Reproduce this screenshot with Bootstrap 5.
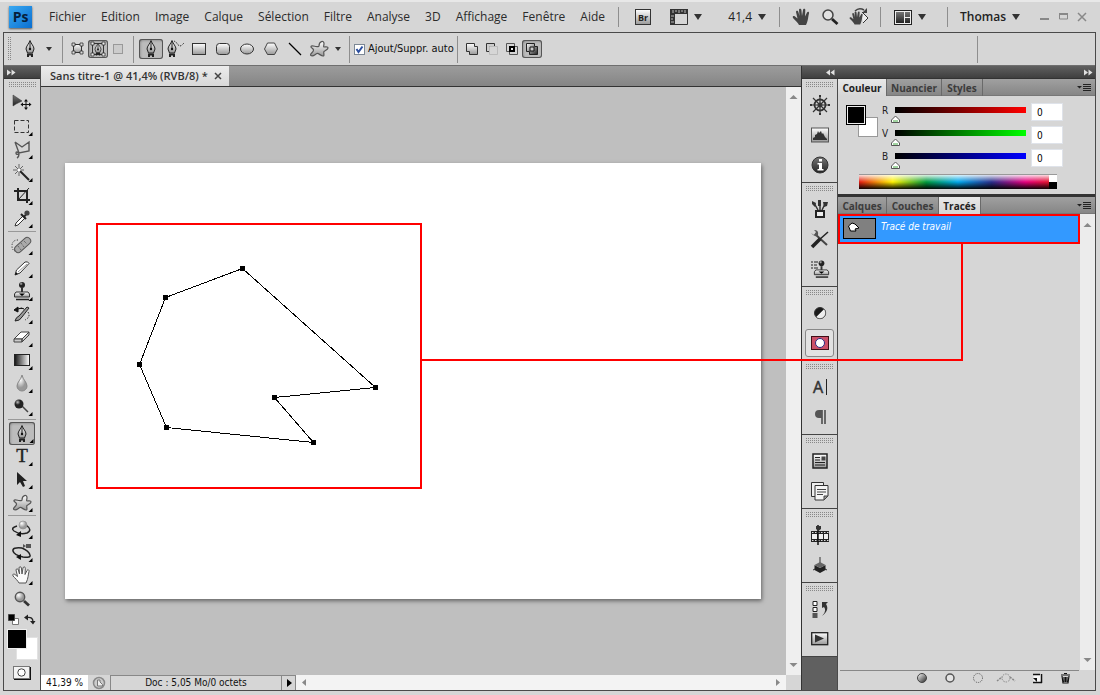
<!DOCTYPE html>
<html lang="fr">
<head>
<meta charset="utf-8">
<meta name="viewport" content="width=device-width, initial-scale=1">
<title>Sans titre-1</title>
<link href="https://cdn.jsdelivr.net/npm/bootstrap@5.3.0/dist/css/bootstrap.min.css" rel="stylesheet">
<style>
:root{--face:#d6d6d6;--edge:#4a4a4a;--ui:"Open Sans","Noto Sans",sans-serif;--small:"DejaVu Sans Condensed","DejaVu Sans",sans-serif;
--dots:url("data:image/svg+xml,%3Csvg xmlns='http://www.w3.org/2000/svg' width='2' height='2'%3E%3Crect width='1' height='1' fill='%23888'/%3E%3C/svg%3E")}
body{background:var(--face);font:12px/16px var(--ui);color:#222}
button{border:0;background:none;padding:0;color:inherit;flex:none}
svg{display:block;flex:none}
.app{min-height:100vh;border-top:2px solid #e8e8e8}
.menubar{height:30px;padding:0 13px 0 9px}
.menubar .divider{height:20px}
.menubar .caret{width:12px}
.logo{width:23px;height:22px;background:linear-gradient(135deg,#39a9f2,#0b6fd0);color:#06203c;font:bold 14px/21px var(--ui);text-align:center;box-shadow:0 1px 2px #555}
.menus{margin-left:17px;gap:15px}
.menus a{color:#2b2b2b;text-decoration:none;white-space:nowrap}
.divider{width:1px;background:#8e8e8e;flex:none}
.caret{width:14px;height:20px;display:flex;align-items:center;justify-content:center}
.caret::before{content:"";border:4px solid transparent;border-top:6px solid #333;border-bottom:0}
.caret-sm::before{border-width:4px 3px 0}
.frame{margin:0 4px 4px 3px;border:1px solid var(--edge)}
.options{height:33px;padding-left:4px;border-bottom:1px solid #6f6f6f}
.options .divider{height:27px}
.grip-v{width:4px;height:24px;background:var(--dots)}
.grip-h{height:5px;background:var(--dots);flex:none}
.btn-s{width:20px;height:18px;display:flex;align-items:center;justify-content:center}
.btn-m{width:24px;height:20px;display:flex;align-items:center;justify-content:center}
.pressed{border-radius:3px;background:#bcbcbc;box-shadow:inset 0 0 0 1px #555,inset 1px 1px 3px #777}
.form-check-input.auto{width:11px;height:11px;margin:0;border:1px solid #7b8794;border-radius:0;background-color:#fff;background-size:11px 11px;box-shadow:none;flex:none}
.form-check-input.auto:checked{background-image:url("data:image/svg+xml,%3Csvg xmlns='http://www.w3.org/2000/svg' viewBox='0 0 11 11'%3E%3Cpath d='M2.5 5l2 3L8.500 2.500' fill='none' stroke='%232b4fa0' stroke-width='2'/%3E%3C/svg%3E")}
.small-ui{font:10px/14px var(--small);color:#111}
.auto-label{font:11px/14px var(--small);color:#111;margin:0 3px;white-space:nowrap}
.darkbar{height:13px;background:linear-gradient(#606060,#3f3f3f);border-bottom:1px solid #333;flex:none;display:flex;align-items:center}
.tools{width:37px;border-right:1px solid var(--edge);flex:none}
.tools .grip-h{margin:3px 4px 5px 5px}
.tool{width:26px;height:23px;margin-left:5px;display:flex;align-items:center;justify-content:center}
.rule{height:1px;margin:1px 4px 2px 4px;background:#999}
.swatches{display:grid;grid-template:8px 12px 11px/9px 11px 11px;margin:4px 0 0 3px}
.fgc{grid-area:1/1/3/3;background:#000;border:1px solid #eee;z-index:1}
.bgc{grid-area:2/2/4/4;background:#fff;border:1px solid #e2e2e2}
.mask-btn{width:17px;height:13px;margin:6px 0 0 9px;background:#f4f4f4;border:1px solid #777;box-shadow:1px 1px 0 #111;display:grid;place-items:center}
.doc{min-width:0}
.tabstrip{height:21px;background:linear-gradient(#9c9c9c,#858585);border-bottom:1px solid #333}
.doctab{width:188px;padding:0 7px 0 9px;background:linear-gradient(#ececec,#d8d8d8);font:600 11px/20px var(--ui);color:#333;white-space:nowrap}
.pasteboard{background:#bfbfbf;padding:76px 25px 76px 24px}
.paper{background:#fff;padding:60px 31px;box-shadow:1px 2px 4px #666}
.scroll-v{width:15px;background:#efefef;padding:5px 0;flex:none}
.status{height:15px;background:var(--face)}
.status .zoomfield{width:47px;height:15px;border:0;border-radius:0;background:#fff;padding:0 0 0 5px}
.docinfo{width:171px;border:solid #888;border-width:1px 0 0 1px;text-align:center}
.playbtn{width:15px;border:1px solid #888;border-bottom:0;height:15px;display:grid;place-items:center}
.hscroll{background:#f3f3f3}
.side{width:294px;flex:none;border-left:1px solid #333}
.dock{width:36px;background:#606060;border-right:1px solid var(--edge)}
.dockgroup{background:var(--face);border-bottom:1px solid #444;padding-bottom:2px}
.dockgroup .grip-h{margin:3px 4px 3px 4px}
.dockgroup button{width:29px;height:30px;margin-left:3px;display:flex;align-items:center;justify-content:center}
.dockgroup .chosen{border:1px solid #888;border-radius:3px;background:#e2e2e2;height:28px;margin-top:1px;margin-bottom:1px}
.panels{min-width:0;background:var(--face)}
.ptabs{height:17px;background:linear-gradient(#a0a0a0,#868686);border-bottom:1px solid #777;padding-right:4px;flex:none}
.ptabs button{font:700 10px/16px var(--ui);color:#3c3c3c;padding:0;border-right:1px solid #6a6a6a;height:17px;text-align:center}
.ptabs button.on{background:linear-gradient(#e8e8e8,#d6d6d6);color:#222}
.w-a{width:49px}.w-b{width:55px}.w-c{width:41px}.w-d{width:52px}.w-e{width:42px}
.ptabs .pmenu{margin-left:auto;border:0;padding:0;display:grid;place-items:center;height:16px}
.colorpane{height:98px;padding:8px 8px 0 8px}
.pairs{display:grid;grid-template:12px 8px 12px/12px 8px 12px;margin-top:1px;width:32px}
.pairs .a{grid-area:1/1/3/3;background:#000;border:2px solid #000;outline:1px solid #eee;outline-offset:-2px;z-index:1}
.pairs .b{grid-area:2/2/4/4;background:#fff;border:1px solid #999}
.channels{margin:3px 0 0 4px}
.chan{height:23px}
.chan label{width:8px;margin-top:-2px;font:10px/12px var(--small);color:#222}
.chan input[type=range]{appearance:none;-webkit-appearance:none;width:141px;height:17px;margin:0;background:var(--ramp) 5px 0/131px 6px no-repeat;box-shadow:none}
.chan input[type=range]::-webkit-slider-thumb{-webkit-appearance:none;width:11px;height:9px;margin-top:8px;border:0;background:url("data:image/svg+xml,%3Csvg xmlns='http://www.w3.org/2000/svg' width='11' height='9'%3E%3Cpath d='M5.500 1L9.500 5V7.500H1.500V5z' fill='%23fff' stroke='%23555'/%3E%3Cpath d='M3 6h5' stroke='%234a4'/%3E%3C/svg%3E")}
.chan input[type=text]{width:32px;height:18px;border:1px solid #dfe3ea;background:#fff;padding:0 0 0 5px;margin-top:-4px;font:10px/14px var(--small)}
.spectrum{height:15px;margin:-2px 30px 0 13px;border-top:1px solid #999;background:linear-gradient(rgba(255,255,255,.85),rgba(255,255,255,0) 50%,rgba(0,0,0,.95)),linear-gradient(90deg,#e31b13,#fff200 17%,#009a3e 34%,#00a8ec 50%,#2a2f8c 67%,#e5007e 84%,#e31b13)}
.spectrum i{width:8px;background:linear-gradient(#fff 50%,#000 50%)}
.gapbar{height:3px;background:#333;flex:none}
.pathrow{height:30px;background:#39f;border:2px solid #f00;color:#fff}
.pathrow .thumb{width:33px;height:21px;background:#808080;border:1px solid #000;margin:2px 5px 0 3px}
.pathrow em{font:italic 10px/22px var(--small);color:#fff}
.pscroll{width:15px;background:#ececec;padding:7px 0 5px}
.pfoot{height:20px;margin:0 16px 0 2px;border-top:1px solid #888;padding-left:72px;gap:8px}
.pfoot button{width:20px;height:14px;display:grid;place-items:center}
.callout{position:absolute;left:421px;right:137px;top:241px;height:118px;border:solid #f00;border-width:0 2px 2px 0;pointer-events:none}
</style>
</head>
<body>
<svg width="0" height="0" class="position-absolute" aria-hidden="true">
<defs>
<linearGradient id="gv" x2="0" y2="1"><stop stop-color="#fff"/><stop offset="1" stop-color="#999"/></linearGradient>
<linearGradient id="gh"><stop stop-color="#111"/><stop offset="1" stop-color="#fff"/></linearGradient>
<linearGradient id="gd" x2="1" y2="1"><stop stop-color="#fff"/><stop offset="1" stop-color="#222"/></linearGradient>
<linearGradient id="gk" x2="0" y2="1"><stop stop-color="#777"/><stop offset="1" stop-color="#222"/></linearGradient>
<radialGradient id="gb" cx=".35" cy=".3"><stop stop-color="#fff"/><stop offset="1" stop-color="#999"/></radialGradient>
<radialGradient id="gn" cx=".35" cy=".3"><stop stop-color="#bbb"/><stop offset=".6" stop-color="#222"/></radialGradient>
<symbol id="corner" viewBox="-12 -11 24 23"><path d="M10.500 6v4h-4z" fill="#000"/></symbol>
<symbol id="pen" viewBox="-8 -10 16 20"><path d="M0-8.500C1-5 4-3 4 0L2.500 4h-5L-4 0C-4-3-1-5 0-8.500z" fill="url(#gv)" stroke="#222"/><path d="M0-7V0" stroke="#222"/><circle r="1.200" fill="#111"/><path d="M-3 4.500H3V8H1V6.500H-1V8H-3z" fill="#222"/></symbol>
<symbol id="blob" viewBox="-11 -10 22 20"><path d="M0-3C0-8 5-9 5-5.500 5-3 4-2.500 5-2c2 0 4-.5 4 1S6 1.500 5 2.500 6 7 4 7-.5 4-2 4.500-6 8-8 6.500-5 3-5.500 1-8.500-1-8-2.500-4-2.500-3-2.500 0-2 0-3z" fill="url(#gv)" stroke="#555" stroke-width="1.200"/></symbol>
<symbol id="stamp" viewBox="-10 -10 20 20"><circle cy="-6" r="3" fill="url(#gn)"/><path d="M-1-3h2v4h-2z" fill="#333"/><path d="M-6 1h12l1.500 2v3h-15V3z" fill="url(#gv)" stroke="#333"/><path d="M-3 2.500h6L0 5z" fill="#000"/><path d="M-6 8.500H7" stroke="#222" stroke-width="1.500"/></symbol>
<symbol id="hand" viewBox="-10 -10 20 20"><path d="M-3 8c-1-2-4-5-6-7-1-2 1-2.500 2-1.500l2.500 2L-6-5c0-1.500 2-1.700 2.400 0L-2.500-1-3-7c0-1.700 2.200-1.700 2.400 0L0-1 1-7c.3-1.600 2.400-1.500 2.300.2L3-.5 5-4.500c.8-1.300 2.500-.7 2 1C6 0 6.500 3 4 8z"/></symbol>
<symbol id="glass" viewBox="-10 -10 20 20"><circle cx="-2" cy="-2" r="4.700" fill="url(#gb)" stroke="#555" stroke-width="1.400"/><path d="M2 2l5 4.500" stroke="#333" stroke-width="2.800"/></symbol>
<symbol id="lens" viewBox="-10 -10 20 20"><circle cx="-2" cy="-2" r="5" fill="#e2e2e2" stroke="#444" stroke-width="1.500"/><path d="M2 2l5.500 5" stroke="#222" stroke-width="2.800"/></symbol>
<symbol id="dbl" viewBox="0 0 9 7"><path d="M0 .5v6l4-3zM4.500 .5v6l4-3z" fill="#e0e0e0"/></symbol>
<symbol id="pm" viewBox="0 0 14 9"><path d="M0 3h5L2.500 5.500z" fill="#222"/><path d="M6 1.500h8M6 3.500h8M6 5.500h8M6 7.500h8" stroke="#222"/></symbol>
</defs></svg>

<div class="app d-flex flex-column position-relative">
<header class="menubar d-flex align-items-center">
  <div class="logo">Ps</div>
  <nav class="menus d-flex">
    <a href="#">Fichier</a><a href="#">Edition</a><a href="#">Image</a><a href="#">Calque</a><a href="#">Sélection</a><a href="#">Filtre</a><a href="#">Analyse</a><a href="#">3D</a><a href="#">Affichage</a><a href="#">Fenêtre</a><a href="#">Aide</a>
  </nav>
  <div class="d-flex align-items-center ms-auto">
    <span class="divider"></span>
    <button class="ms-3" aria-label="Bridge"><svg width="16" height="16"><rect x=".5" y=".5" width="15" height="15" fill="url(#gv)" stroke="#333"/><text x="8" y="12" text-anchor="middle" font-family="Open Sans" font-size="9" font-weight="700" fill="#222">Br</text></svg></button>
    <button class="d-flex align-items-center" style="margin-left:19px" aria-label="Affichage des extras"><svg width="18" height="16"><path d="M0 0h18v5H5v11H0z" fill="#333"/><path d="M3 1v3M6 1v2M9 1v3M12 1v2M15 1v3M1 7h3M1 10h2M1 13h3" stroke="#bbb"/><path d="M17.500 5v10.500H5" fill="none" stroke="#333"/></svg><span class="caret ms-1"></span></button>
    <button class="d-flex align-items-center" style="margin-left:24px">41,4<span class="caret ms-1"></span></button>
    <span class="divider" style="margin-left:11px"></span>
    <button style="margin-left:12px" aria-label="Main"><svg width="20" height="20" fill="#444"><use href="#hand"/></svg></button>
    <button class="ms-2" aria-label="Zoom"><svg width="20" height="20"><use href="#lens"/></svg></button>
    <button class="ms-2" aria-label="Rotation"><svg width="22" height="20" viewBox="-11 -10 22 20"><path d="M3-5l6 6-5 5" fill="#eee" stroke="#333"/><svg x="-10" y="-7" width="16" height="16" fill="#444"><use href="#hand"/></svg><path d="M-4-6q4-4 9-1" fill="none" stroke="#444" stroke-width="1.500"/><path d="M3-4h5v-5z" fill="#444"/></svg></button>
    <span class="divider" style="margin-left:10px"></span>
    <button class="d-flex align-items-center" style="margin-left:13px" aria-label="Réorganiser"><svg width="18" height="15"><rect x=".5" y=".5" width="17" height="14" fill="#eee" stroke="#222"/><path d="M2 2h8v11H2zM11 2h5v5h-5zM11 8h5v5h-5z" fill="url(#gk)"/></svg><span class="caret ms-1"></span></button>
    <span class="divider" style="margin-left:19px"></span>
    <button class="d-flex align-items-center fw-semibold" style="margin-left:12px">Thomas<span class="caret ms-1"></span></button>
    <button style="margin-left:17px" aria-label="Réduire"><svg width="11" height="12"><path d="M1 8h9" stroke="#888" stroke-width="2"/></svg></button>
    <button class="ms-2" aria-label="Agrandir"><svg width="11" height="12"><path d="M1.500 3h8v5h-8z" fill="none" stroke="#888"/><path d="M1 3h9" stroke="#888" stroke-width="2"/></svg></button>
    <button class="ms-2" aria-label="Fermer"><svg width="10" height="12"><path d="M1 2l8 8M9 2l-8 8" stroke="#888" stroke-width="1.500"/></svg></button>
  </div>
</header>

<div class="frame flex-grow-1 d-flex flex-column">
<div class="options d-flex align-items-center">
  <span class="grip-v"></span>
  <button class="btn-m" style="margin-left:6px" aria-label="Plume"><svg width="16" height="20"><use href="#pen"/></svg></button>
  <button class="caret caret-sm" aria-label="Formes prédéfinies"></button>
  <span class="divider" style="margin-left:6px"></span>
  <button class="btn-s" style="margin-left:5px" aria-label="Calques de forme"><svg width="14" height="14"><path d="M2.500 2.500h8v8h-8z" fill="url(#gv)" stroke="#333"/><path d="M1 1h3v3H1zM9 1h3v3H9zM1 9h3v3H1zM9 9h3v3H9z" fill="#ddd" stroke="#333" stroke-width=".8"/></svg></button>
  <button class="btn-s pressed" aria-label="Tracés"><svg width="16" height="16" viewBox="-8 -8 16 16"><path d="M-5.500-5.500h11v11h-11z" fill="none" stroke="#333"/><path d="M-7-7h3v3h-3zM4-7h3v3H4zM-7 4h3v3h-3zM4 4h3v3H4z" fill="#eee" stroke="#333" stroke-width=".8"/><svg x="-6" y="-7" width="12" height="15"><use href="#pen"/></svg></svg></button>
  <button class="btn-s" aria-label="Pixels de remplissage"><svg width="12" height="12"><rect x="1.500" y="1.500" width="9" height="9" fill="#ccc" stroke="#999"/></svg></button>
  <span class="divider" style="margin-left:5px"></span>
  <button class="btn-m pressed" style="margin-left:5px" aria-label="Plume"><svg width="16" height="20"><use href="#pen"/></svg></button>
  <button class="btn-m" aria-label="Plume libre"><svg width="20" height="20"><svg x="-1" y="0" width="16" height="20"><use href="#pen"/></svg><path d="M9 2l2 1 2 3 3 1 3-3" fill="none" stroke="#222" stroke-dasharray="1 1"/></svg></button>
  <button class="btn-m" aria-label="Rectangle"><svg width="16" height="14"><rect x="1.500" y="1.500" width="13" height="11" fill="url(#gv)" stroke="#333"/></svg></button>
  <button class="btn-m" aria-label="Rectangle arrondi"><svg width="16" height="14"><rect x="1.500" y="1.500" width="13" height="11" rx="3" fill="url(#gv)" stroke="#333"/></svg></button>
  <button class="btn-m" aria-label="Ellipse"><svg width="16" height="14"><ellipse cx="8" cy="7" rx="6.500" ry="5" fill="url(#gv)" stroke="#333"/></svg></button>
  <button class="btn-m" aria-label="Polygone"><svg width="16" height="14"><path d="M4.500 1h7l3 6-3 5.500h-7L1.500 7z" fill="url(#gv)" stroke="#444"/></svg></button>
  <button class="btn-m" aria-label="Trait"><svg width="16" height="16"><path d="M2 2l12 12" stroke="#000" stroke-width="1.300"/></svg></button>
  <button class="btn-m" aria-label="Forme personnalisée"><svg width="22" height="20"><use href="#blob"/></svg></button>
  <button class="caret caret-sm" aria-label="Options de géométrie"></button>
  <span class="divider ms-1"></span>
  <input class="form-check-input auto" style="margin-left:4px" type="checkbox" id="auto" checked>
  <label class="auto-label" for="auto">Ajout/Suppr. auto</label>
  <span class="divider"></span>
  <button class="btn-s ms-1" aria-label="Ajouter"><svg width="14" height="14"><path d="M1.500 1.500h8v3h3v8h-8v-3h-3z" fill="url(#gv)" stroke="#333"/></svg></button>
  <button class="btn-s" aria-label="Soustraire"><svg width="14" height="14"><path d="M1.500 1.500h8v3h-5v5h-3z" fill="#ccc" stroke="#333"/><path d="M4.500 4.500h8v8h-8z" fill="#d6d6d6" stroke="#bbb"/></svg></button>
  <button class="btn-s" aria-label="Intersection"><svg width="14" height="14"><path d="M1.500 1.500h8v8h-8zM4.500 4.500h8v8h-8z" fill="none" stroke="#555"/><path d="M5 5h4v4H5z" fill="#eee" stroke="#000" stroke-width="2"/></svg></button>
  <button class="btn-s pressed" aria-label="Exclure"><svg width="14" height="14"><path d="M1.500 1.500h8v3h3v8h-8v-3h-3z" fill="url(#gd)" stroke="#222"/><path d="M5 5h4v4H5z" fill="#ccc" stroke="#111"/></svg></button>
  <span class="divider ms-auto" style="margin-right:117px"></span>
</div>

<div class="flex-grow-1 d-flex">
<aside class="tools">
  <div class="darkbar"><svg width="9" height="7" style="margin-left:3px"><use href="#dbl"/></svg></div>
  <div class="grip-h"></div>
  <button class="tool" aria-label="Déplacement"><svg width="24" height="23" viewBox="-12 -11 24 23"><path d="M-9-8V3L-6 1L0-2z" fill="url(#gk)" stroke="#333" stroke-width=".5"/><path d="M4-3v9M-1 1.500H9" stroke="#111"/><path d="M4-4l2 2.500H2zM4 7l2-2.500H2zM-1.500 1.500l2.500-2v4zM9.500 1.500l-2.500-2v4z" fill="#111"/></svg></button>
  <button class="tool" aria-label="Sélection"><svg width="24" height="23" viewBox="-12 -11 24 23"><rect x="-7.500" y="-5.500" width="14" height="12" fill="none" stroke="#333" stroke-dasharray="4 2"/><use href="#corner" x="-12" y="-11" width="24" height="23"/></svg></button>
  <button class="tool" aria-label="Lasso"><svg width="24" height="23" viewBox="-12 -11 24 23"><path d="M-7-7l7 5 7-5V2L-3 4-7-7M-3 4q-3-2-3 0t3 1q0 3-2 4" fill="none" stroke="#555" stroke-width="1.400"/><use href="#corner" x="-12" y="-11" width="24" height="23"/></svg></button>
  <button class="tool" aria-label="Baguette magique"><svg width="24" height="23" viewBox="-12 -11 24 23"><path d="M-3-8V4M-9-2H2M-7-6l8 8M-7 2l8-8" stroke="#666"/><path d="M-2-1L7 8" stroke="#222" stroke-width="2"/><circle cx="-3" cy="-2" r="1.500" fill="#fff"/><use href="#corner" x="-12" y="-11" width="24" height="23"/></svg></button>
  <button class="tool" aria-label="Recadrage"><svg width="24" height="23" viewBox="-12 -11 24 23"><path d="M-4-7V5H8M-8-4H5V8" fill="none" stroke="#222" stroke-width="2"/><path d="M-4 5L7-7" stroke="#222"/><use href="#corner" x="-12" y="-11" width="24" height="23"/></svg></button>
  <button class="tool" aria-label="Pipette"><svg width="24" height="23" viewBox="-12 -11 24 23"><path d="M-7 8l1-3 7-7 2 2-7 7z" fill="#fff" stroke="#333"/><path d="M-1-4l5 5M2-1l4-5" stroke="#222" stroke-width="2"/><circle cx="5" cy="-5" r="2.600" fill="#444"/><use href="#corner" x="-12" y="-11" width="24" height="23"/></svg></button>
  <div class="rule"></div>
  <button class="tool" aria-label="Correcteur"><svg width="24" height="23" viewBox="-12 -11 24 23"><rect x="-9" y="-3" width="19" height="7" rx="3.500" transform="rotate(-42)" fill="#aaa" stroke="#555"/><path d="M-1-2l3 4M2-4l3 3M-4 1l3 4" stroke="#555" stroke-dasharray="1 1"/><path d="M-4-5q-6 0-6 6 0 4 3 5" fill="none" stroke="#222" stroke-dasharray="1 1.500"/><use href="#corner" x="-12" y="-11" width="24" height="23"/></svg></button>
  <button class="tool" aria-label="Crayon"><svg width="24" height="23" viewBox="-12 -11 24 23"><path d="M-7 7l1.500-5L3-6q3-1 4 1.500L-2 5z" fill="#fff" stroke="#333"/><path d="M-4 4L5-4" stroke="#999"/><path d="M-7 7l1-3 2 2z" fill="#111"/><use href="#corner" x="-12" y="-11" width="24" height="23"/></svg></button>
  <button class="tool" aria-label="Tampon"><svg width="24" height="23" viewBox="-12 -11 24 23"><use href="#stamp" x="-10" y="-10" width="20" height="20"/><use href="#corner" x="-12" y="-11" width="24" height="23"/></svg></button>
  <button class="tool" aria-label="Forme d'historique"><svg width="24" height="23" viewBox="-12 -11 24 23"><path d="M-7 7q1-4 4-5l8-9 2 1-7 9q-2 4-7 4z" fill="#999" stroke="#222"/><path d="M-8-4l4-3v5zM-4-5q4-2 6 0" fill="#111" stroke="#111"/><path d="M6-2q3 5-3 8" fill="none" stroke="#222" stroke-dasharray="1.500 1.500"/><use href="#corner" x="-12" y="-11" width="24" height="23"/></svg></button>
  <button class="tool" aria-label="Gomme"><svg width="24" height="23" viewBox="-12 -11 24 23"><path d="M-8 2L-1-5h8L0 2z" fill="#fff" stroke="#444"/><path d="M-8 2H0v3h-8zM0 2l7-7v3L0 5z" fill="#ccc" stroke="#444"/><use href="#corner" x="-12" y="-11" width="24" height="23"/></svg></button>
  <button class="tool" aria-label="Dégradé"><svg width="24" height="23" viewBox="-12 -11 24 23"><rect x="-7.500" y="-5.500" width="15" height="11" fill="url(#gh)" stroke="#222"/><use href="#corner" x="-12" y="-11" width="24" height="23"/></svg></button>
  <button class="tool" aria-label="Goutte d'eau"><svg width="24" height="23" viewBox="-12 -11 24 23"><path d="M0-8C1-3 5-1 5 3a5 5 0 0 1-10 0C-5-1-1-3 0-8z" fill="url(#gb)" stroke="#888"/><use href="#corner" x="-12" y="-11" width="24" height="23"/></svg></button>
  <button class="tool" aria-label="Densité"><svg width="24" height="23" viewBox="-12 -11 24 23"><path d="M0 0l6 6" stroke="#444" stroke-width="1.500"/><circle cx="-3" cy="-2" r="4.500" fill="url(#gn)"/><use href="#corner" x="-12" y="-11" width="24" height="23"/></svg></button>
  <div class="rule"></div>
  <button class="tool pressed" aria-label="Plume"><svg width="24" height="23" viewBox="-12 -11 24 23"><use href="#pen" x="-8" y="-9" width="16" height="20"/><use href="#corner" x="-11" y="-11" width="24" height="23"/></svg></button>
  <button class="tool" aria-label="Texte"><svg width="24" height="23" viewBox="-12 -11 24 23"><text x="0" y="6" text-anchor="middle" font-family="Liberation Serif" font-size="19" fill="#222" stroke="#222" stroke-width=".4">T</text><use href="#corner" x="-12" y="-11" width="24" height="23"/></svg></button>
  <button class="tool" aria-label="Sélection de tracé"><svg width="24" height="23" viewBox="-12 -11 24 23"><path d="M-5-7V6l3-3 3 5 2-1-2-5h4z" fill="#222"/><use href="#corner" x="-12" y="-11" width="24" height="23"/></svg></button>
  <button class="tool" aria-label="Forme"><svg width="24" height="23" viewBox="-12 -11 24 23"><use href="#blob" x="-11" y="-9" width="22" height="20"/><use href="#corner" x="-12" y="-11" width="24" height="23"/></svg></button>
  <div class="rule"></div>
  <button class="tool" aria-label="Rotation 3D"><svg width="24" height="23" viewBox="-12 -11 24 23"><path d="M-5-3q-7 2-3 5 6 4 13 2 6-3-1-8" fill="none" stroke="#222" stroke-width="1.500"/><path d="M-1 2v6l-5-2z" fill="#111"/><circle cx="1" cy="-4" r="4" fill="url(#gb)" stroke="#888" stroke-width=".6"/><use href="#corner" x="-12" y="-11" width="24" height="23"/></svg></button>
  <button class="tool" aria-label="Orbite 3D"><svg width="24" height="23" viewBox="-12 -11 24 23"><path d="M0-4q-10-1-9 3 1 4 10 6 8 1 7-2-1-4-8-7" fill="none" stroke="#222" stroke-width="1.500"/><path d="M-1 2v6l-5-3z" fill="#111"/><path d="M4-8h5v4H4zM1-8l3 2-3 2z" fill="#555"/><use href="#corner" x="-12" y="-11" width="24" height="23"/></svg></button>
  <button class="tool" aria-label="Main"><svg width="24" height="23" viewBox="-12 -11 24 23"><use href="#hand" x="-10" y="-10" width="20" height="20" fill="#fafafa" stroke="#555"/><use href="#corner" x="-12" y="-11" width="24" height="23"/></svg></button>
  <button class="tool" aria-label="Zoom"><svg width="20" height="20"><use href="#glass"/></svg></button>
  <div class="d-flex ms-1 mt-1"><button aria-label="Couleurs par défaut"><svg width="12" height="11"><path d="M4.500 4.500h6v6h-6z" fill="#fff" stroke="#777"/><path d="M.5 .5h6v6h-6z" fill="#000" stroke="#444"/></svg></button><button class="ms-1" aria-label="Permuter"><svg width="12" height="11"><path d="M3 3.500q6-1 6 4.500" fill="none" stroke="#222" stroke-width="1.300"/><path d="M0 3.500l4-3v6zM6 7h5.500L9 10.500z" fill="#222"/></svg></button></div>
  <div class="swatches"><span class="fgc"></span><span class="bgc"></span></div>
  <button class="mask-btn" aria-label="Mode masque"><svg width="9" height="9"><circle cx="4.500" cy="4.500" r="3.700" fill="#fff" stroke="#444"/></svg></button>
</aside>

<main class="doc flex-grow-1 d-flex flex-column">
  <div class="tabstrip d-flex"><div class="doctab d-flex align-items-center justify-content-between"><span>Sans titre-1 @ 41,4% (RVB/8) *</span><button aria-label="Fermer le document"><svg width="8" height="8"><path d="M1 1l6 6M7 1L1 7" stroke="#444" stroke-width="1.500"/></svg></button></div></div>
  <div class="flex-grow-1 d-flex">
    <div class="pasteboard flex-grow-1 d-flex"><div class="paper flex-grow-1">
      <svg width="326" height="266"><rect x="1" y="1" width="324" height="264" fill="none" stroke="#f00" stroke-width="2"/>
      <path d="M146.500 45.500L279.500 164.500 178.500 174.500 217.500 219.500 70.500 204.500 43.500 141.500 69.500 74.500z" fill="none" stroke="#000" shape-rendering="crispEdges"/>
      <path d="M144 43h5v5h-5zM277 162h5v5h-5zM176 172h5v5h-5zM215 217h5v5h-5zM68 202h5v5h-5zM41 139h5v5h-5zM67 72h5v5h-5z"/></svg>
    </div></div>
    <div class="scroll-v d-flex flex-column justify-content-between align-items-center"><svg width="9" height="8"><path d="M.5 7h8l-4-4z" fill="#888"/></svg><svg width="9" height="8"><path d="M.5 1h8l-4 4z" fill="#888"/></svg></div>
  </div>
  <div class="status d-flex small-ui">
    <input class="zoomfield small-ui" value="41,39 %" aria-label="Zoom">
    <button class="d-flex align-items-center justify-content-center" style="width:22px" aria-label="Version Cue"><svg width="14" height="14"><circle cx="7" cy="7" r="5.500" fill="#ccc" stroke="#888" stroke-width="1.500"/><path d="M5.500 4v6h5V8.500L8 6V4z" fill="#eee" stroke="#777"/></svg></button>
    <span class="docinfo">Doc : 5,05 Mo/0 octets</span>
    <button class="playbtn" aria-label="Infos"><svg width="6" height="10"><path d="M1 1v8l5-4z"/></svg></button>
    <div class="hscroll flex-grow-1 d-flex justify-content-between align-items-center px-1"><svg width="8" height="9"><path d="M6 1v7L2 4.500z" fill="#888"/></svg><svg width="8" height="9"><path d="M2 1v7l4-3.500z" fill="#888"/></svg></div>
    <span style="width:15px"></span>
  </div>
</main>

<aside class="side d-flex flex-column">
  <div class="darkbar justify-content-between"><svg width="9" height="7" style="margin-left:24px" viewBox="0 0 9 7"><path d="M4 .5v6l-4-3zM8.500 .5v6l-4-3z" fill="#e0e0e0"/></svg><svg width="9" height="7" style="margin-right:2px"><use href="#dbl"/></svg></div>
  <div class="flex-grow-1 d-flex">
  <div class="dock">
    <div class="dockgroup d-flex flex-column"><div class="grip-h"></div>
      <button aria-label="Navigation"><svg width="20" height="20" viewBox="-10 -10 20 20"><g fill="none" stroke="#333"><circle r="5.500" stroke-width="1.800"/><circle r="2"/><path d="M0-9.500V9.500M-9.500 0H9.500M-7-7L7 7M-7 7L7-7" stroke-width="1.200"/></g><path d="M-1-9h2M-1 9h2M-9-1v2M9-1v2" stroke="#333" stroke-width="2"/></svg></button>
      <button aria-label="Histogramme"><svg width="18" height="16"><rect x=".5" y="1" width="17" height="14" fill="url(#gv)" stroke="#555"/><path d="M2 13V11l2-1V8l2-1 1-3 1 2 2-2 1 3 1-1 2 4 2 2v1z" fill="#333"/></svg></button>
      <button aria-label="Informations"><svg width="18" height="18"><circle cx="9" cy="9" r="8" fill="url(#gk)" stroke="#333"/><path d="M8 3h3v2.500H8zM6.500 7H11v6h1.500v1.500h-6V13H8V8.500H6.500z" fill="#fff"/></svg></button>
    </div>
    <div class="dockgroup d-flex flex-column"><div class="grip-h"></div>
      <button aria-label="Formes prédéfinies"><svg width="18" height="20"><path d="M5 12h8v6H5z" fill="#eee" stroke="#222" stroke-width="2"/><path d="M7 11L3 4M9 11V3M11 11l3-6" stroke="#333" stroke-width="1.500"/><path d="M1 2l4 2-1 4-3-3zM7 1h3v6H7zM12 3l5 0-1 4-3 1z" fill="#333"/></svg></button>
      <button aria-label="Outils prédéfinis"><svg width="20" height="20"><path d="M5 5l12 11" stroke="#444" stroke-width="2"/><path d="M1 4l3 2 2-3-2-2q5 0 4 5-3 3-7-2z" fill="#555"/><path d="M18 3l-9 8" stroke="#222" stroke-width="1.500"/><path d="M10 10l-8 8" stroke="#222" stroke-width="3.500"/></svg></button>
      <button aria-label="Source de duplication"><svg width="20" height="20"><svg x="2" y="0" width="19" height="20"><use href="#stamp"/></svg><path d="M1 3h2M4 3h4M1 6h2M4 6h3M1 9h2M4 9h4" stroke="#222"/></svg></button>
    </div>
    <div class="dockgroup d-flex flex-column"><div class="grip-h"></div>
      <button aria-label="Réglages"><svg width="14" height="14"><circle cx="7" cy="7" r="5.500" fill="#1a1a1a" stroke="#333"/><path d="M11 3L3 11a5.500 5.500 0 0 0 8 0 5.500 5.500 0 0 0 0-8" fill="#eee" stroke="#444" stroke-width=".7"/></svg></button>
      <button class="chosen" aria-label="Masques"><svg width="18" height="14"><rect x=".5" y=".5" width="17" height="13" fill="#cc5068" stroke="#401018"/><circle cx="9" cy="7" r="4.500" fill="#fff" stroke="#2a2a80"/></svg></button>
    </div>
    <div class="dockgroup d-flex flex-column"><div class="grip-h"></div>
      <button aria-label="Caractère"><svg width="22" height="24"><text x="4" y="18" font-family="Open Sans" font-size="16" fill="#333" stroke="#333" stroke-width=".5">A</text><path d="M17.500 4v16" stroke="#222"/></svg></button>
      <button aria-label="Paragraphe"><svg width="16" height="18"><path d="M13 2v14M10 2v14" stroke="#444" stroke-width="1.500"/><path d="M14 2H7a4 4 0 0 0 0 8h3V2z" fill="#555"/></svg></button>
    </div>
    <div class="dockgroup d-flex flex-column"><div class="grip-h"></div>
      <button aria-label="Notes"><svg width="16" height="16"><rect x="1" y="1" width="14" height="14" fill="url(#gv)" stroke="#222" stroke-width="1.500"/><path d="M3 4.500h5M3 7h5M3 9.500h10M3 12h10" stroke="#222" stroke-width="1.200"/><path d="M9.500 3.500h4v4h-4z" fill="#444"/></svg></button>
      <button aria-label="Compositions de calques"><svg width="20" height="20"><path d="M1.500 1.500h12v14h-12z" fill="#eee" stroke="#333"/><path d="M5 4.500h13V15l-4 4H5z" fill="#f4f4f4" stroke="#333"/><path d="M7 8.500h9M7 11h9M7 13.500h6M14 19v-4h4z" fill="#999" stroke="#444"/></svg></button>
    </div>
    <div class="dockgroup d-flex flex-column"><div class="grip-h"></div>
      <button aria-label="Animation"><svg width="18" height="20"><path d="M0 6h18v11H0z" fill="#222"/><path d="M1 9h5v5H1zM7 9h5v5H7zM13 9h4v5h-4z" fill="#eee"/><path d="M1 7.500h17M1 15.500h17" stroke="#ddd" stroke-dasharray="1.500 1.500"/><path d="M7 0v20" stroke="#111" stroke-width="1.500"/><path d="M5 1h5v3l-2.500 2L5 4z" fill="#333"/></svg></button>
      <button aria-label="3D"><svg width="16" height="18"><path d="M8 1v7M1 14l4-2M15 14l-4-2" stroke="#333"/><path d="M8 12L2.500 9v5L8 17l5.500-3V9z" fill="#222"/><path d="M8 6l5.500 3L8 12 2.500 9z" fill="#666"/></svg></button>
    </div>
    <div class="dockgroup d-flex flex-column"><div class="grip-h"></div>
      <button aria-label="Historique"><svg width="18" height="20"><path d="M2 2.500h4v4H2zM2 8.500h4v4H2z" fill="#fff" stroke="#222"/><path d="M1.500 14h5v5h-5z" fill="#555"/><path d="M11 17q5-5 2-9l-2 1V3h6l-2 2q4 6-4 12z" fill="#333"/></svg></button>
      <button aria-label="Scripts"><svg width="18" height="14"><rect x=".7" y=".7" width="16" height="12" fill="url(#gv)" stroke="#222" stroke-width="1.300"/><path d="M4 2.500v8l9-4z" fill="#333"/></svg></button>
    </div>
  </div>
  <div class="panels flex-grow-1 d-flex flex-column">
    <div class="ptabs d-flex"><button class="on w-a">Couleur</button><button class="w-b">Nuancier</button><button class="w-c">Styles</button><button class="pmenu" aria-label="Menu du panneau"><svg width="14" height="9"><use href="#pm"/></svg></button></div>
    <div class="colorpane">
      <div class="d-flex">
        <div class="pairs"><span class="a"></span><span class="b"></span></div>
        <div class="channels">
          <div class="chan d-flex"><label for="r">R</label><input type="range" id="r" min="0" max="255" value="0" style="--ramp:linear-gradient(90deg,#000,red)"><input type="text" value="0" aria-label="R"></div>
          <div class="chan d-flex"><label for="v">V</label><input type="range" id="v" min="0" max="255" value="0" style="--ramp:linear-gradient(90deg,#000,lime)"><input type="text" value="0" aria-label="V"></div>
          <div class="chan d-flex"><label for="b">B</label><input type="range" id="b" min="0" max="255" value="0" style="--ramp:linear-gradient(90deg,#000,blue)"><input type="text" value="0" aria-label="B"></div>
        </div>
      </div>
      <div class="spectrum d-flex justify-content-end"><i></i></div>
    </div>
    <div class="gapbar"></div>
    <div class="ptabs d-flex"><button class="w-a">Calques</button><button class="w-d">Couches</button><button class="on w-e">Tracés</button><button class="pmenu" aria-label="Menu du panneau"><svg width="14" height="9"><use href="#pm"/></svg></button></div>
    <div class="flex-grow-1 d-flex">
      <div class="flex-grow-1"><div class="pathrow d-flex"><span class="thumb"><svg width="31" height="19"><path d="M4.500 7L8 4l3 1 4 4-4 1 1 2H6.500z" fill="#fff" stroke="#000"/></svg></span><em>Tracé de travail</em></div></div>
      <div class="pscroll d-flex flex-column justify-content-between align-items-center"><svg width="9" height="8"><path d="M.5 6h8l-4-4z" fill="#888"/></svg><svg width="9" height="8"><path d="M.5 1h8l-4 4z" fill="#888"/></svg></div>
    </div>
    <div class="pfoot d-flex align-items-start">
      <button aria-label="Fond"><svg width="12" height="12"><circle cx="6" cy="6" r="4.500" fill="url(#gd)" stroke="#444"/></svg></button>
      <button aria-label="Contour"><svg width="12" height="12"><circle cx="6" cy="6" r="4" fill="#e4e4e4" stroke="#555" stroke-width="1.500"/></svg></button>
      <button aria-label="Sélection"><svg width="12" height="12"><circle cx="6" cy="6" r="4.500" fill="none" stroke="#555" stroke-dasharray="1 1"/></svg></button>
      <button aria-label="Tracé de travail"><svg width="20" height="12"><circle cx="10" cy="6" r="4" fill="none" stroke="#888" stroke-dasharray="1.500 1"/><path d="M1 9l5-4M14 5l5 4" stroke="#888" stroke-width="1.500" stroke-dasharray="2 1"/></svg></button>
      <button style="margin-left:3px" aria-label="Nouveau"><svg width="11" height="11"><path d="M1.500 1.500h8v8h-8z" fill="#f8f8f8"/><path d="M1 1.500h7M9.500 1v9M1 9.500h9" stroke="#111" stroke-width="1.500"/><path d="M1 5h4v4z" fill="#111"/></svg></button>
      <button aria-label="Supprimer"><svg width="11" height="12"><path d="M1 3h9M4 1.500h3M2 4l1 7h5l1-7M4 5v5M5.500 5v5M7 5v5" fill="none" stroke="#111" stroke-width="1.200"/></svg></button>
    </div>
  </div>
  </div>
</aside>
</div>
</div>
<div class="callout"></div>
</div>
<script src="https://cdn.jsdelivr.net/npm/bootstrap@5.3.0/dist/js/bootstrap.bundle.min.js"></script>
</body>
</html>
